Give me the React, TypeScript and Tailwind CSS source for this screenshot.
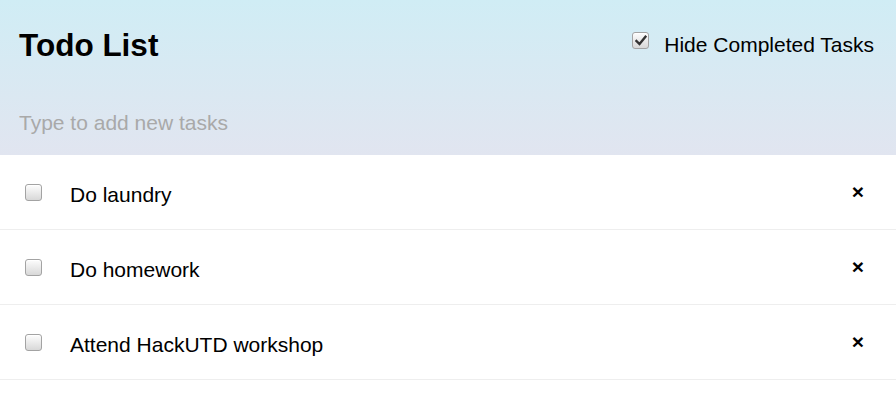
import React from "react";

function Box({ checked = false }: { checked?: boolean }) {
  return (
    <span className="relative flex h-[17px] w-[17px] shrink-0 items-center justify-center rounded-[3px] border border-[#a3a3a3] bg-gradient-to-b from-[#fdfdfd] to-[#d8d8d8] shadow-[inset_0_1px_0_#fff]">
      {checked && (
        <svg width="12" height="11" viewBox="0 0 12 11" className="block">
          <path d="M1.5 6 L4.5 9 L10.5 1.8" fill="none" stroke="#333" strokeWidth="2.4" strokeLinecap="square" />
        </svg>
      )}
    </span>
  );
}

const tasks = ["Do laundry", "Do homework", "Attend HackUTD workshop"];

export default function App() {
  return (
    <div className="h-[419px] w-[896px] overflow-hidden bg-white font-['Liberation_Sans',Arial,sans-serif] text-[21px] text-black">
      <header className="flex h-[155px] flex-col bg-gradient-to-b from-[#d0edf5] to-[#e1e5f0] pl-[19px] pr-[22px]">
        <div className="flex items-start justify-between pt-[30px]">
          <h1 className="m-0 text-[31.5px] font-bold leading-none">Todo List</h1>
          <label className="mt-[3px] flex items-start gap-[15px] leading-[24px]">
            <span className="mt-[-1px]">
              <Box checked />
            </span>
            <span>Hide Completed Tasks</span>
          </label>
        </div>
        <input
          type="text"
          placeholder="Type to add new tasks"
          className="mt-[43px] h-[36px] w-full border-none bg-transparent p-0 text-[21px] outline-none placeholder:text-[#a9a9a9]"
        />
      </header>
      <ul className="m-0 list-none p-0">
        {tasks.map((t) => (
          <li
            key={t}
            className="box-border flex h-[75px] items-center border-b border-[#eeeeee] pl-[25px] pr-[32px]"
          >
            <Box />
            <span className="ml-[28px] mt-[5px] flex-1 leading-[24px]">{t}</span>
            <button className="border-none bg-transparent p-0 text-[21px] font-bold leading-[24px]">×</button>
          </li>
        ))}
      </ul>
    </div>
  );
}
